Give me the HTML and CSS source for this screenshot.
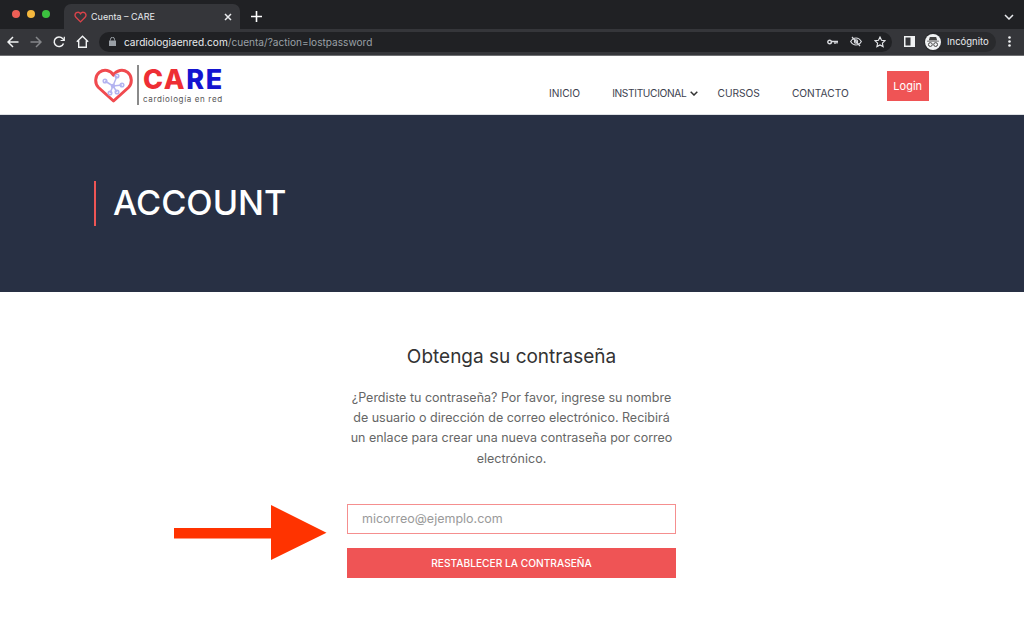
FILE: index.html
```html
<!DOCTYPE html>
<html lang="es">
<head>
    <meta charset="UTF-8">
    <meta name="viewport" content="width=device-width, initial-scale=1.0">
    <title>Cuenta – CARE</title>
    <link rel="stylesheet" href="styles.css">
</head>
<body>
    <!-- browser chrome -->
    <div class="tabstrip">
        <div class="traffic">
            <span class="dot dot-red"></span>
            <span class="dot dot-yellow"></span>
            <span class="dot dot-green"></span>
        </div>
        <div class="tab">
            <svg class="tab-icon" width="13" height="12" viewBox="0 0 24 22" fill="none" stroke="#d8434a" stroke-width="2.6"><path d="M12 20 3.5 11.5C1 9 1.500 4.800 4.500 3c2.600-1.500 5.800-.7 7.500 2 1.700-2.700 4.900-3.500 7.500-2 3 1.800 3.500 6 1 8.500z"/></svg>
            <span class="tab-title">Cuenta – CARE</span>
            <svg class="tab-close" width="8" height="8" viewBox="0 0 8 8" stroke="#e8eaed" stroke-width="1.500"><path d="M1 1l6 6M7 1 1 7"/></svg>
        </div>
        <svg class="tab-new" width="11" height="11" viewBox="0 0 11 11" stroke="#fff" stroke-width="1.600"><path d="M5.500 0v11M0 5.500h11"/></svg>
        <svg class="tab-list" width="10" height="6" viewBox="0 0 10 6" fill="none" stroke="#e8eaed" stroke-width="1.500"><path d="M1 1l4 4 4-4"/></svg>
    </div>
    <div class="toolbar">
        <svg class="nav-btn" width="12" height="12" viewBox="0 0 12 12" fill="none" stroke="#f1f3f4" stroke-width="1.500"><path d="M11.500 6H1M6 1 1 6l5 5"/></svg>
        <svg class="nav-btn" width="12" height="12" viewBox="0 0 12 12" fill="none" stroke="#85878a" stroke-width="1.500"><path d="M.5 6H11M6 1l5 5-5 5"/></svg>
        <svg class="nav-btn" width="12" height="12" viewBox="0 0 12 12" fill="none" stroke="#f1f3f4" stroke-width="1.500"><path d="M10.500 7.500A4.800 4.800 0 1 1 9.600 2.600L11 4"/><path d="M11.300.8v3.700H7.600" stroke-width="1.200"/></svg>
        <svg class="nav-btn" width="13" height="13" viewBox="0 0 13 13" fill="none" stroke="#f1f3f4" stroke-width="1.400"><path d="M.8 6.800 6.500 1.300l5.700 5.500M2.700 5.500v6.700h7.600V5.500"/></svg>
        <div class="omnibox">
            <svg width="7" height="9" viewBox="0 0 7 9"><path fill="#9aa0a6" d="M0 3.500h7V9H0z"/><path fill="none" stroke="#9aa0a6" d="M1.500 3.500V2.300a2 2 0 0 1 4 0v1.200"/></svg>
            <span class="url"><span class="url-host">cardiologiaenred.com</span>/cuenta/?action=lostpassword</span>
            <svg class="omni-icon" width="11" height="6" viewBox="0 0 11 6" fill="none" stroke="#dadce0" stroke-width="1.400"><circle cx="2.600" cy="3" r="1.800"/><path d="M4.500 2.500H11M8 2.500v2.500M10 2.500v2"/></svg>
            <svg class="omni-icon" width="12" height="11" viewBox="0 0 12 11" fill="none" stroke="#dadce0" stroke-width="1.200"><path d="M.7 5.500C2 3.200 3.800 2 6 2s4 1.200 5.300 3.500C10 7.800 8.200 9 6 9S2 7.800.7 5.500z"/><circle cx="6" cy="5.500" r="1.600"/><path d="M2 1l8 9"/></svg>
            <svg width="12" height="12" viewBox="0 0 12 12" fill="none" stroke="#e8eaed" stroke-width="1.100"><path d="M6 1l1.500 3.300 3.500.4-2.600 2.400.7 3.500L6 8.900l-3.100 1.700.7-3.500L1 4.700l3.500-.4z"/></svg>
        </div>
        <svg class="side-panel" width="11" height="11" viewBox="0 0 11 11"><path fill="#f1f3f4" d="M0 0h11v11H0z"/><path fill="#35363a" d="M1.500 1.500h5v8h-5z"/></svg>
        <div class="incognito">
            <span class="incognito-face">
                <svg width="12" height="10" viewBox="0 0 13 11" fill="#444"><path d="M3 0h7l1 3.500H2zM0 4h13v1H0z"/><circle cx="3.600" cy="8.300" r="2.100" fill="none" stroke="#444" stroke-width="1.100"/><circle cx="9.400" cy="8.300" r="2.100" fill="none" stroke="#444" stroke-width="1.100"/></svg>
            </span>
            <span>Incógnito</span>
        </div>
        <svg class="menu-dots" width="3" height="11" viewBox="0 0 3 11" fill="#f1f3f4"><circle cx="1.500" cy="1.500" r="1.300"/><circle cx="1.500" cy="5.500" r="1.300"/><circle cx="1.500" cy="9.500" r="1.300"/></svg>
    </div>

    <!-- site header -->
    <header class="site-header">
        <a class="logo">
            <svg class="logo-heart" width="39" height="37" viewBox="0 0 39 37" fill="none">
                <path d="M19.500 34 4.500 20.500C.5 16.500.8 9 5.500 5.200c4.800-3.400 10.800-2 14 3 3.200-5 9.200-6.400 14-3C38.200 9 38.500 16.500 34.500 20.500z" stroke="#f04a4f" stroke-width="3" stroke-linejoin="round"/>
                <g stroke="#b4b4f0" stroke-width="1.500"><path d="M19 19l-8-5M19 19l4-10M19 19l9-1M19 19l-3 7M19 19l4 6"/><circle cx="11" cy="14" r="1.800"/><circle cx="23" cy="9" r="1.800"/><circle cx="28" cy="18" r="1.800"/><circle cx="16" cy="26" r="1.800"/><circle cx="23" cy="25" r="1.800"/><circle cx="19" cy="19" r="1.500"/></g>
            </svg>
            <span class="logo-rule"></span>
            <span class="logo-text">
                <span class="logo-name"><span class="logo-ca">CA</span><span class="logo-re">RE</span></span>
                <span class="logo-tag">cardiología en red</span>
            </span>
        </a>
        <nav class="main-nav">
            <a>INICIO</a>
            <a class="has-sub"><span class="sub-label">INSTITUCIONAL</span><svg width="8" height="5" viewBox="0 0 8 5" fill="none" stroke="#333" stroke-width="1.500"><path d="M.7.700 4 4 7.300.700"/></svg></a>
            <a>CURSOS</a>
            <a>CONTACTO</a>
        </nav>
        <a class="login-btn">Login</a>
    </header>

    <section class="hero">
        <h1>ACCOUNT</h1>
    </section>

    <main class="content">
        <h2>Obtenga su contraseña</h2>
        <p>¿Perdiste tu contraseña? Por favor, ingrese su nombre de usuario o dirección de correo electrónico. Recibirá un enlace para crear una nueva contraseña por correo electrónico.</p>
        <form class="reset-form">
            <input type="text" placeholder="micorreo@ejemplo.com">
            <button type="button">RESTABLECER LA CONTRASEÑA</button>
        </form>
    </main>

    <!-- annotation drawn over the page -->
    <svg class="arrow" width="154" height="56" viewBox="0 0 154 56"><path fill="#ff3300" d="M0 23h97V0l55.500 27.700L97 55V33.500H0z"/></svg>
</body>
</html>
```

FILE: styles.css
```css
* {
    box-sizing: border-box;
}
html, body {
    height: 636px;
    overflow: hidden;
}
body {
    margin: 0;
    position: relative;
    font-family: 'Inter', 'Liberation Sans', sans-serif;
    background: #fff;
}
a {
    text-decoration: none;
}

/* browser chrome */
.tabstrip {
    height: 29px;
    background: #202124;
    display: flex;
    align-items: flex-end;
    padding-left: 12px;
}
.traffic {
    display: flex;
    gap: 7px;
    align-self: flex-start;
    margin-top: 10px;
    width: 52px;
}
.dot {
    width: 8px;
    height: 8px;
    border-radius: 50%;
}
.dot-red { background: #ed5f56; }
.dot-yellow { background: #f5b83d; }
.dot-green { background: #3cc23f; }
.tab {
    width: 176px;
    height: 25px;
    background: #35363a;
    border-radius: 7px 7px 0 0;
    display: flex;
    align-items: center;
    padding: 0 8px 0 10px;
    color: #e8eaed;
    font-size: 9px;
}
.tab-title {
    margin-left: 4px;
    flex: 1;
}
.tab-new {
    margin: 0 0 7px 11px;
}
.tab-list {
    margin: 0 10px 9px auto;
}
.toolbar {
    height: 27px;
    background: #35363a;
    border-bottom: 1px solid #6e6f72;
    display: flex;
    align-items: center;
    padding: 0 13px 1px 7px;
}
.nav-btn {
    margin-right: 11px;
}
.nav-btn:nth-child(4) {
    margin-right: 10px;
}
.omnibox {
    width: 793px;
    height: 20px;
    background: #202124;
    border-radius: 10px;
    display: flex;
    align-items: center;
    gap: 8px;
    padding: 0 6px 0 10px;
    flex: none;
}
.url {
    flex: 1;
    font-size: 10.100px;
    color: #9aa0a6;
}
.url-host {
    color: #e8eaed;
}
.omni-icon {
    margin-right: 4px;
}
.side-panel {
    margin-left: 12px;
    flex: none;
}
.incognito {
    height: 20px;
    margin-left: 9px;
    padding: 0 7px 0 1px;
    border-radius: 10px;
    background: #292a2d;
    color: #e8eaed;
    font-size: 9.500px;
    display: flex;
    align-items: center;
    gap: 6px;
    flex: none;
}
.incognito-face {
    width: 16px;
    height: 16px;
    border-radius: 50%;
    background: #f1f3f4;
    display: flex;
    align-items: center;
    justify-content: center;
}
.menu-dots {
    margin-left: auto;
}

/* site header */
.site-header {
    height: 59px;
    background: #fff;
    border-bottom: 1px solid #dfe1e5;
    display: flex;
    padding-left: 94px;
}
.logo {
    display: flex;
    align-items: center;
    width: 455px;
    flex: none;
}
.logo-rule {
    width: 2px;
    height: 40px;
    background: #8a8a8a;
    margin: 0 4px;
}
.logo-text {
    display: flex;
    flex-direction: column;
    padding-bottom: 2px;
}
.logo-name {
    font-size: 27px;
    font-weight: 800;
    line-height: 29px;
    letter-spacing: 1.600px;
}
.logo-ca { color: #ee2e34; }
.logo-re { color: #1414d0; }
.logo-tag {
    font-size: 8px;
    line-height: 10px;
    color: #555;
    letter-spacing: .65px;
}
.main-nav {
    display: flex;
    align-items: flex-end;
    gap: 32px;
    padding-bottom: 14px;
    font-size: 10.200px;
    white-space: nowrap;
    flex: none;
}
.main-nav a {
    color: #3d4250;
    line-height: 14px;
}
.main-nav .has-sub {
    display: flex;
    align-items: center;
    gap: 4px;
    margin-right: -13px;
}
.sub-label {
    letter-spacing: -.35px;
}
.login-btn {
    width: 42px;
    height: 30px;
    margin: 15px 0 0 38px;
    background: #ef5455;
    color: #fff;
    font-size: 11px;
    display: flex;
    align-items: center;
    justify-content: center;
}

.hero {
    height: 177px;
    background: #283044;
    padding: 66px 0 0 94px;
}
.hero h1 {
    margin: 0;
    height: 45px;
    border-left: 2px solid #ee5555;
    padding-left: 17px;
    color: #fff;
    font-size: 34.300px;
    font-weight: 500;
    line-height: 44px;
}

.content {
    width: 329px;
    margin-left: 347px;
    padding-top: 53px;
    text-align: center;
}
.content h2 {
    margin: 0;
    font-size: 19px;
    font-weight: 400;
    line-height: 24px;
    color: #333;
}
.content p {
    margin: 19px 0 0;
    font-size: 12.500px;
    line-height: 20.200px;
    color: #666;
}
.reset-form {
    display: flex;
    flex-direction: column;
    gap: 14px;
    margin-top: 35px;
}
.reset-form input {
    height: 30px;
    border: 1px solid #f58f8f;
    padding: 0 14px 1px;
    font: 12.500px 'Inter', 'Liberation Sans', sans-serif;
    outline: none;
}
.reset-form input::placeholder {
    color: #9a9a9a;
}
.reset-form button {
    height: 30px;
    border: none;
    background: #ef5455;
    color: #fff;
    font: 500 10.200px 'Inter', 'Liberation Sans', sans-serif;
}

.arrow {
    position: absolute;
    left: 174px;
    top: 505px;
}
```
